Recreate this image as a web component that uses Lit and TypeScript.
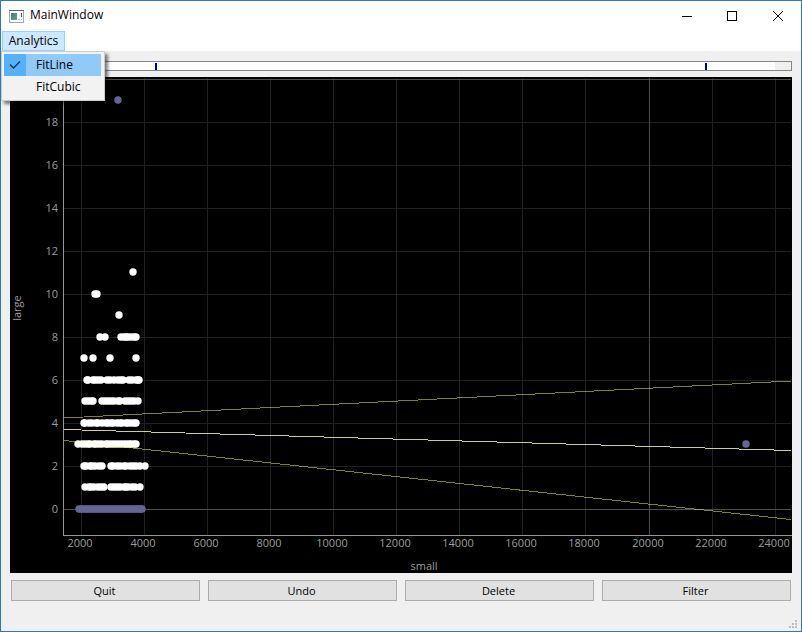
import { LitElement, html, svg, css } from "lit";
import { customElement, state } from "lit/decorators.js";

const range = (n: number) => Array.from({ length: n }, (_, i) => i);

// Plot geometry, in view box units.
const LEFT = 53;
const RIGHT = 781;
const BOTTOM = 458;
const xOf = (v: number) => Math.floor(71.4 + ((v - 2000) * 63.07) / 2000);
const yOf = (v: number) => Math.floor(432 - v * 21.5);

const X_TICKS = range(12).map((i) => 2000 + i * 2000);
const Y_TICKS = range(11).map((i) => i * 2);

// Horizontal positions of the samples found on each integer level.
const SAMPLES: [number, number[]][] = [
  [11, [123]],
  [10, [85, 87]],
  [9, [109]],
  [8, [90, 95, 111, 114, 116, 118, 121, 124, 126]],
  [7, [74, 83, 100, 126]],
  [6, [77, 78, 83, 85, 88, 91, 97, 100, 104, 108, 111, 113, 119, 122, 126, 128, 129]],
  [5, [75, 78, 81, 83, 92, 95, 98, 101, 104, 108, 110, 115, 118, 121, 124, 128]],
  [4, [74, 75, 79, 82, 86, 88, 92, 96, 98, 101, 103, 107, 110, 112, 116, 118, 121, 124, 126]],
  [3, [68, 72, 75, 78, 80, 84, 86, 89, 92, 96, 98, 101, 104, 107, 110, 113, 116, 119, 121, 124, 126]],
  [2, [74, 76, 80, 82, 85, 89, 92, 101, 103, 107, 110, 114, 116, 120, 123, 126, 130, 135]],
  [1, [75, 79, 81, 84, 88, 91, 94, 101, 104, 107, 110, 114, 116, 118, 122, 125, 130]],
];
const REJECTED: [number, number][] = [
  [19, 108],
  [3, 736],
  ...range(32).map((i): [number, number] => [0, 69 + i * 2]),
  [0, 132],
];

@customElement("scatter-plot")
export class ScatterPlot extends LitElement {
  static styles = css`
    :host { display: block; background: #000; }
    svg { display: block; width: 100%; height: auto; }
    .grid { stroke: #202020; }
    .major { stroke: #4e4e4e; }
    .axis { stroke: #969696; }
    .grid, .major, .axis, .band, .fit { stroke-width: 1; shape-rendering: crispEdges; }
    text { font: 11px "Open Sans", "Noto Sans", sans-serif; fill: #9c9c9c; }
    .mid { text-anchor: middle; }
    .end { text-anchor: end; }
    .dot { fill: #fff; }
    .rejected { fill: #666696; }
    .band { stroke: #ffff64; stroke-opacity: 0.5; }
    .fit { stroke: #ffffb0; stroke-opacity: 0.8; }
  `;

  render() {
    const v = (t: number, cls: string) =>
      svg`<line class=${cls} x1=${xOf(t) + 0.5} x2=${xOf(t) + 0.5} y1="1" y2=${BOTTOM}></line>`;
    const h = (t: number, cls: string) =>
      svg`<line class=${cls} x1=${LEFT} x2=${RIGHT} y1=${yOf(t) + 0.5} y2=${yOf(t) + 0.5}></line>`;
    return html`
      <svg viewBox="0 0 782 496" role="img" aria-label="large against small">
        ${X_TICKS.filter((t) => t !== 20000).map((t) => v(t, "grid"))}
        ${Y_TICKS.filter((t) => t % 20).map((t) => h(t, "grid"))}
        ${v(20000, "major")} ${h(0, "major")} ${h(20, "major")}
        <line class="axis" x1="53.5" x2="53.5" y1="1" y2="459"></line>
        <line class="axis" x1="53" x2="782" y1="458.5" y2="458.5"></line>
        ${SAMPLES.map(([level, xs]) =>
          xs.map((x) => svg`<circle class="dot" cx=${x} cy=${yOf(level)} r="3.7"></circle>`)
        )}
        ${REJECTED.map(([level, x]) => svg`<circle class="rejected" cx=${x} cy=${yOf(level)} r="3.7"></circle>`)}
        <line class="band" x1="54" y1="341" x2="781" y2="304"></line>
        <line class="fit" x1="54" y1="352.5" x2="781" y2="373.5"></line>
        <line class="band" x1="54" y1="363.5" x2="781" y2="442.5"></line>
        ${X_TICKS.map((t) => svg`<text class="mid" x=${xOf(t) - 1} y="470">${t}</text>`)}
        ${Y_TICKS.filter((t) => t < 20).map(
          (t) => svg`<text class="end" x="48" y=${yOf(t) + 4}>${t}</text>`
        )}
        <text class="mid" x="414" y="493">small</text>
        <text class="mid" transform="translate(11 231) rotate(-90)">large</text>
      </svg>
    `;
  }
}

@customElement("app-root")
export class AppRoot extends LitElement {
  @state() private fit = "FitLine";

  static styles = css`
    :host {
      display: flex;
      flex-direction: column;
      box-sizing: border-box;
      min-height: 100vh;
      border: 1px solid #2f7ab5;
      background: #f0f0f0;
      color: #000;
      font: 12px "Open Sans", "Noto Sans", sans-serif;
    }
    button { font: inherit; color: inherit; margin: 0; padding: 0; border: 0; background: none; }
    .title { display: flex; align-items: center; height: 30px; padding-left: 8px; background: #fff; }
    .title h1 { flex: 1; margin: 0 0 0 6px; font-size: 12px; font-weight: 400; line-height: 16px; padding-bottom: 2px; }
    .title svg { display: block; }
    .caption { display: flex; justify-content: center; align-items: center; width: 46px; height: 30px; }
    .menubar { position: relative; display: flex; height: 20px; background: #fff; }
    .opener {
      width: 63px; height: 20px; margin-left: 1px;
      box-sizing: border-box; border: 1px solid #99d1ff; background: #cce8ff; line-height: 18px;
    }
    .menu {
      position: absolute; z-index: 1; top: 20px; left: 0;
      box-sizing: border-box; width: 104px; padding: 2px;
      border: 1px solid #ccc; background: #f2f2f2;
      box-shadow: 3px 3px 3px rgba(0, 0, 0, 0.5);
    }
    .item { display: flex; align-items: center; width: 97px; height: 22px; text-align: left; line-height: 20px; }
    .mark { display: flex; align-items: center; justify-content: center; width: 22px; height: 22px; margin-right: 10px; }
    .item[aria-checked="true"] { background: #91c9f7; }
    .item[aria-checked="true"] .mark { background: #56b0fa; }
    .body { padding: 10px 9px 30px; }
    .range {
      position: relative; height: 8px; margin-bottom: 6px; border: 1px solid #85858c;
      background: linear-gradient(#fff, #fff) left / 98% 100% no-repeat #f0f0f0;
    }
    .range input {
      position: absolute; left: 0; top: 1px; width: 100%; height: 7px; margin: 0;
      appearance: none; background: none; pointer-events: none;
    }
    .range input::-webkit-slider-thumb {
      appearance: none; width: 2px; height: 7px; background: #000096; pointer-events: auto;
    }
    .actions { display: grid; grid-template-columns: repeat(4, 1fr); gap: 8px; padding: 7px 1px 0; }
    .actions button {
      height: 21px; padding-right: 2px; border: 1px solid #adadad; background: #e1e1e1;
      font-size: 11px; line-height: 19px;
    }
    .grip { position: absolute; right: 4px; bottom: 3px; }
    .frame { position: relative; flex: 1; }
  `;

  render() {
    return html`
      <header class="title">
        <svg width="15" height="13" viewBox="0 0 15 13">
          <rect x="0.5" y="0.5" width="14" height="12" fill="#fff" stroke="#a4a8ac"></rect>
          <path d="M0 0.5H15" stroke="#62686e"></path>
          <defs>
            <linearGradient id="pane" x1="0" y1="0" x2="1" y2="1">
              <stop offset="0" stop-color="#3f72a0"></stop>
              <stop offset="1" stop-color="#57b07c"></stop>
            </linearGradient>
          </defs>
          <rect x="2" y="3" width="6" height="7" fill="url(#pane)"></rect>
          <path d="M12.5 3V7" stroke="#3f5870"></path>
          <path d="M9 9.5H11M12 9.5H13" stroke="#a9c4b6"></path>
        </svg>
        <h1>MainWindow</h1>
        <button class="caption" aria-label="Minimize">
          <svg width="12" height="12"><path d="M2 6.5H12" stroke="#000"></path></svg>
        </button>
        <button class="caption" aria-label="Maximize">
          <svg width="10" height="10"><rect x="0.5" y="0.5" width="9" height="9" fill="none" stroke="#000"></rect></svg>
        </button>
        <button class="caption" aria-label="Close">
          <svg width="10" height="10"><path d="M0 0L10 10M10 0L0 10" stroke="#000"></path></svg>
        </button>
      </header>
      <nav class="menubar">
        <button class="opener" aria-haspopup="menu" aria-expanded="true">Analytics</button>
        <div class="menu" role="menu" aria-label="Analytics">
          ${["FitLine", "FitCubic"].map(
            (name) => html`
              <button
                class="item"
                role="menuitemcheckbox"
                aria-checked=${this.fit === name ? "true" : "false"}
                @click=${() => (this.fit = name)}
              >
                <span class="mark">
                  ${this.fit === name
                    ? html`<svg width="12" height="10"><path d="M1 4.5L4.5 8L11 1.5" fill="none" stroke="#1f3650" stroke-width="1.4"></path></svg>`
                    : ""}
                </span>
                ${name}
              </button>
            `
          )}
        </div>
      </nav>
      <div class="frame">
        <main class="body">
          <div class="range">
            <input type="range" aria-label="Lower bound" min="0" max="1000" value="185" />
            <input type="range" aria-label="Upper bound" min="0" max="1000" value="892" />
          </div>
          <scatter-plot></scatter-plot>
          <div class="actions">
            ${["Quit", "Undo", "Delete", "Filter"].map((name) => html`<button>${name}</button>`)}
          </div>
        </main>
        <svg class="grip" width="8" height="8" fill="#bfbfbf">
          <path d="M6 0h2v2h-2zM3 3h2v2h-2zM6 3h2v2h-2zM0 6h2v2h-2zM3 6h2v2h-2zM6 6h2v2h-2z"></path>
        </svg>
      </div>
    `;
  }
}
